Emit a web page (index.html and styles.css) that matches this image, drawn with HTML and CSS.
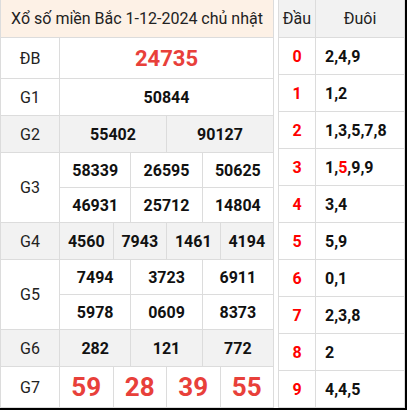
FILE: index.html
```html
<!DOCTYPE html>
<html lang="vi">
<head>
<meta charset="utf-8">
<title>Xổ số miền Bắc 1-12-2024</title>
<link rel="stylesheet" href="styles.css">
</head>
<body>
<div class="frame">
  <div class="results">
    <div class="title">Xổ số miền Bắc 1-12-2024 chủ nhật</div>

    <div class="label">ĐB</div>
    <div class="num special s12">24735</div>

    <div class="label">G1</div>
    <div class="num s12">50844</div>

    <div class="label gray">G2</div>
    <div class="num gray s6">55402</div>
    <div class="num gray s6">90127</div>

    <div class="label tall">G3</div>
    <div class="num s4">58339</div>
    <div class="num s4">26595</div>
    <div class="num s4">50625</div>
    <div class="num s4">46931</div>
    <div class="num s4">25712</div>
    <div class="num s4">14804</div>

    <div class="label gray">G4</div>
    <div class="num gray s3">4560</div>
    <div class="num gray s3">7943</div>
    <div class="num gray s3">1461</div>
    <div class="num gray s3">4194</div>

    <div class="label tall">G5</div>
    <div class="num s4">7494</div>
    <div class="num s4">3723</div>
    <div class="num s4">6911</div>
    <div class="num s4">5978</div>
    <div class="num s4">0609</div>
    <div class="num s4">8373</div>

    <div class="label gray">G6</div>
    <div class="num gray s4">282</div>
    <div class="num gray s4">121</div>
    <div class="num gray s4">772</div>

    <div class="label">G7</div>
    <div class="num big s3">59</div>
    <div class="num big s3">28</div>
    <div class="num big s3">39</div>
    <div class="num big s3">55</div>
  </div>

  <div class="loto">
    <div class="head">Đầu</div>
    <div class="head">Đuôi</div>

    <div class="dau">0</div><div class="duoi">2,4,9</div>
    <div class="dau">1</div><div class="duoi">1,2</div>
    <div class="dau">2</div><div class="duoi">1,3,5,7,8</div>
    <div class="dau">3</div><div class="duoi">1,<span class="hl">5</span>,9,9</div>
    <div class="dau">4</div><div class="duoi">3,4</div>
    <div class="dau">5</div><div class="duoi">5,9</div>
    <div class="dau">6</div><div class="duoi">0,1</div>
    <div class="dau">7</div><div class="duoi">2,3,8</div>
    <div class="dau">8</div><div class="duoi">2</div>
    <div class="dau">9</div><div class="duoi">4,4,5</div>
  </div>
</div>
</body>
</html>
```

FILE: styles.css
```css
* { box-sizing: border-box; }

html, body {
  margin: 0;
  padding: 0;
  background: #fff;
}

body {
  font-family: Roboto, "Liberation Sans", Arial, sans-serif;
  color: #222;
}

.frame {
  width: 407px;
  height: 410px;
  display: flex;
  gap: 4px;
  border-right: 2px solid #000;
  border-bottom: 2px solid #000;
}

.results {
  width: 274px;
  display: grid;
  grid-template-columns: 58px repeat(12, 1fr);
  grid-template-rows: 37px 40px 36px 36px 34px 34px 36px 34px 34px 36px 40px;
  gap: 1px;
  padding: 0 1px 1px 1px;
  background: #dcdcdc;
}

.results > div {
  display: flex;
  align-items: center;
  justify-content: center;
  background: #fff;
}

.title {
  grid-column: 1 / -1;
  background: #fdf1e6 !important;
  font-size: 16px;
  color: #222;
}

.label {
  font-size: 16px;
  color: #222;
}

.label.tall { grid-row: span 2; }

.results > .gray { background: #f2f2f2; }

.num {
  font-size: 16px;
  font-weight: 700;
  color: #111;
}

.s12 { grid-column: span 12; }
.s6 { grid-column: span 6; }
.s4 { grid-column: span 4; }
.s3 { grid-column: span 3; }

.num.special {
  font-size: 22px;
  color: #e8403a;
}

.num.big {
  font-size: 26px;
  color: #e8403a;
}

.loto {
  width: 127px;
  display: grid;
  grid-template-columns: 36px 1fr;
  grid-template-rows: 37px repeat(10, 36px);
  gap: 1px;
  padding: 0 1px 1px 1px;
  background: #dcdcdc;
}

.loto > div {
  display: flex;
  align-items: center;
  background: #fff;
}

.loto > .head {
  background: #f2f2f2;
  justify-content: center;
  font-size: 16px;
  color: #222;
}

.dau {
  justify-content: center;
  font-size: 16px;
  font-weight: 700;
  color: #f00;
}

.duoi {
  padding-left: 9px;
  font-size: 16px;
  font-weight: 700;
  color: #111;
}

.hl { color: #f00; }
```
